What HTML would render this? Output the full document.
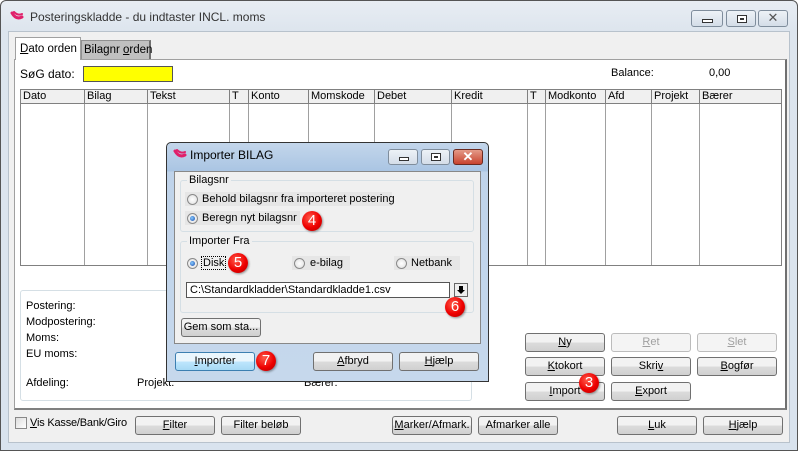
<!DOCTYPE html>
<html><head><meta charset="utf-8"><style>
*{box-sizing:border-box;margin:0;padding:0}
body{width:798px;height:451px;position:relative;overflow:hidden;font-family:"Liberation Sans",sans-serif;font-size:11px;color:#000;background:#fff;white-space:nowrap}
.a{position:absolute}
.win{left:0;top:0;width:798px;height:451px;border:1px solid #555;border-radius:6px 6px 0 0;background:linear-gradient(#e8edf3,#dde5ee 30px,#d9e3ee)}
.client{left:8px;top:31px;width:782px;height:412px;background:#f0f0f0;border:1px solid #b8c2cc}
.btn{position:absolute;height:19px;border:1px solid #707070;border-radius:3px;background:linear-gradient(#f2f2f2 50%,#dcdcdc 50%,#d0d0d0);text-align:center;line-height:17px;font-size:11px}
.dis{color:#a0a0a0;border-color:#bcbcbc;background:#f4f4f4}
.th{position:absolute;top:0;height:14px;border-right:1px solid #808080;padding-left:2px;line-height:13px}
.vl{position:absolute;top:14px;bottom:0;border-right:1px solid #a0a0a0}
.badge{position:absolute;width:20px;height:20px;border-radius:50%;background:radial-gradient(circle at 40% 35%,#ff5a4a,#e00 55%,#a00);color:#fff;font-size:15px;text-align:center;line-height:20px;box-shadow:1px 1px 2px rgba(0,0,0,.4)}
.radio{position:absolute;width:11px;height:11px;border-radius:50%;border:1px solid #8a8a8a;background:radial-gradient(#fff,#ddd)}
.radio.on::after{content:"";position:absolute;left:2px;top:2px;width:5px;height:5px;border-radius:50%;background:radial-gradient(circle at 40% 40%,#8cf,#14a)}
.wb{position:absolute;top:10px;height:17px;border:1px solid #7f8d9c;border-radius:3px;background:linear-gradient(#edf2f7,#d4dde8)}
u{text-decoration:underline}
</style></head><body>
<div class="a win"></div>
<svg class="a" style="left:10px;top:11px" width="14" height="10"><path d="M2 2 Q6 9 12 6" stroke="#e0206a" stroke-width="3" fill="none" stroke-linecap="round"/><path d="M4 1 Q8 5 12 3" stroke="#e0206a" stroke-width="2" fill="none" stroke-linecap="round"/></svg>
<div class="a" style="left:30px;top:10px;font-size:12px;color:#333">Posteringskladde - du indtaster INCL. moms</div>
<div class="wb" style="left:691px;width:32px"><div class="a" style="left:10px;top:8px;width:11px;height:4px;border:1px solid #333;background:#fff"></div></div>
<div class="wb" style="left:726px;width:30px"><div class="a" style="left:10px;top:4px;width:10px;height:8px;border:1px solid #333;background:#fff"><div style="margin:2px;height:2px;border:1px solid #333"></div></div></div>
<div class="wb" style="left:758px;width:30px;text-align:center;line-height:14px;color:#555;font-size:13px">✕</div>
<div class="a client"></div>
<div class="a" style="left:14px;top:59px;width:773px;height:351px;background:#fff;border:1px solid #a0a0a0;border-right:2px solid #707070;border-bottom:2px solid #808080"></div>
<div class="a" style="left:15px;top:37px;width:66px;height:23px;background:#fff;border:1px solid #a0a0a0;border-bottom:none;padding:5px 0 0 4px;font-size:11.5px"><u>D</u>ato orden</div>
<div class="a" style="left:81px;top:40px;width:70px;height:19px;background:#c0c0c0;border:1px solid #909090;border-bottom:none;border-right:2px solid #707070;padding:3px 0 0 2px;font-size:11.5px">Bilagnr <u>o</u>rden</div>
<div class="a" style="left:20px;top:67px;font-size:12px">SøG dato:</div>
<div class="a" style="left:83px;top:66px;width:90px;height:16px;background:#ff0;border:1px solid #555"></div>
<div class="a" style="left:611px;top:67px">Balance:</div>
<div class="a" style="left:709px;top:67px">0,00</div>
<div class="a" style="left:20px;top:89px;width:762px;height:177px;border:1px solid #808080;background:#fff">
<div class="a" style="left:0;top:0;width:760px;height:14px;background:#f0f0f0;border-bottom:1px solid #808080"></div>
<div class="th" style="left:0;width:64px">Dato</div><div class="th" style="left:64px;width:63px">Bilag</div><div class="th" style="left:127px;width:82px">Tekst</div><div class="th" style="left:209px;width:19px">T</div><div class="th" style="left:228px;width:60px">Konto</div><div class="th" style="left:288px;width:66px">Momskode</div><div class="th" style="left:354px;width:77px">Debet</div><div class="th" style="left:431px;width:76px">Kredit</div><div class="th" style="left:507px;width:18px">T</div><div class="th" style="left:525px;width:60px">Modkonto</div><div class="th" style="left:585px;width:46px">Afd</div><div class="th" style="left:631px;width:48px">Projekt</div><div class="th" style="left:679px;width:81px;border:none">Bærer</div>
<div class="vl" style="left:63px"></div><div class="vl" style="left:126px"></div><div class="vl" style="left:208px"></div><div class="vl" style="left:227px"></div><div class="vl" style="left:287px"></div><div class="vl" style="left:353px"></div><div class="vl" style="left:430px"></div><div class="vl" style="left:506px"></div><div class="vl" style="left:524px"></div><div class="vl" style="left:584px"></div><div class="vl" style="left:630px"></div><div class="vl" style="left:678px"></div>
</div>
<div class="a" style="left:20px;top:290px;width:452px;height:111px;border:1px solid #d5dfe5;border-radius:3px"></div>
<div class="a" style="left:26px;top:298px;line-height:16px">Postering:<br>Modpostering:<br>Moms:<br>EU moms:</div>
<div class="a" style="left:26px;top:377px">Afdeling:</div>
<div class="a" style="left:137px;top:377px">Projekt:</div>
<div class="a" style="left:304px;top:377px">Bærer:</div>
<div class="btn" style="left:525px;top:333px;width:80px"><u>N</u>y</div>
<div class="btn dis" style="left:611px;top:333px;width:80px"><u>R</u>et</div>
<div class="btn dis" style="left:697px;top:333px;width:80px"><u>S</u>let</div>
<div class="btn" style="left:525px;top:357px;width:80px"><u>K</u>tokort</div>
<div class="btn" style="left:611px;top:357px;width:80px">Skri<u>v</u></div>
<div class="btn" style="left:697px;top:357px;width:80px"><u>B</u>ogfør</div>
<div class="btn" style="left:525px;top:382px;width:80px"><u>I</u>mport</div>
<div class="btn" style="left:611px;top:382px;width:80px"><u>E</u>xport</div>
<div class="badge" style="left:579px;top:373px">3</div>
<div class="a" style="left:15px;top:417px;width:12px;height:12px;border:1px solid #888;background:linear-gradient(135deg,#ddd,#fff)"></div>
<div class="a" style="left:30px;top:417px;font-size:11px;letter-spacing:-0.2px"><u>V</u>is Kasse/Bank/Giro</div>
<div class="btn" style="left:135px;top:416px;width:80px"><u>F</u>ilter</div>
<div class="btn" style="left:221px;top:416px;width:80px">Filter beløb</div>
<div class="btn" style="left:392px;top:416px;width:80px"><u>M</u>arker/Afmark.</div>
<div class="btn" style="left:478px;top:416px;width:80px">Afmarker alle</div>
<div class="btn" style="left:617px;top:416px;width:80px"><u>L</u>uk</div>
<div class="btn" style="left:703px;top:416px;width:80px"><u>H</u>jælp</div>
<!-- dialog -->
<div class="a" style="left:166px;top:142px;width:323px;height:240px;border:1px solid #333;border-radius:5px 5px 0 0;background:linear-gradient(#c3d6eb,#aac5e3 28px,#bfd3ea 29px,#c6d8ec)"></div>
<svg class="a" style="left:173px;top:149px" width="14" height="10"><path d="M2 2 Q6 9 12 6" stroke="#e0206a" stroke-width="3" fill="none" stroke-linecap="round"/><path d="M4 1 Q8 5 12 3" stroke="#e0206a" stroke-width="2" fill="none" stroke-linecap="round"/></svg>
<div class="a" style="left:190px;top:148px;font-size:12px">Importer BILAG</div>
<div class="wb" style="left:388px;top:149px;width:30px;height:16px"><div class="a" style="left:10px;top:7px;width:10px;height:4px;border:1px solid #333;background:#fff"></div></div>
<div class="wb" style="left:421px;top:149px;width:29px;height:16px"><div class="a" style="left:9px;top:3px;width:10px;height:8px;border:1px solid #333;background:#fff"><div style="margin:2px;height:2px;border:1px solid #333"></div></div></div>
<div class="a" style="left:453px;top:149px;width:30px;height:16px;border:1px solid #6b2a20;border-radius:3px;background:linear-gradient(#e49a88,#c8432e);color:#fff;text-align:center;line-height:14px;font-size:13px;font-weight:bold">✕</div>
<div class="a" style="left:174px;top:171px;width:307px;height:173px;background:#f0f0f0;border:1px solid #888"></div>
<div class="a" style="left:180px;top:180px;width:294px;height:52px;border:1px solid #d5dfe5;border-radius:3px"></div>
<div class="a" style="left:187px;top:174px;background:#f0f0f0;padding:0 2px">Bilagsnr</div>
<div class="a" style="left:185px;top:192px;width:207px;height:14px;background:#e6e6e6"></div>
<div class="radio" style="left:187px;top:194px"></div><div class="a" style="left:202px;top:193px">Behold bilagsnr fra importeret postering</div>
<div class="a" style="left:185px;top:211px;width:115px;height:14px;background:#e6e6e6"></div>
<div class="radio on" style="left:187px;top:213px"></div><div class="a" style="left:202px;top:212px">Beregn nyt bilagsnr</div>
<div class="badge" style="left:302px;top:211px">4</div>
<div class="a" style="left:180px;top:241px;width:294px;height:72px;border:1px solid #d5dfe5;border-radius:3px"></div>
<div class="a" style="left:187px;top:235px;background:#f0f0f0;padding:0 2px">Importer Fra</div>
<div class="radio on" style="left:187px;top:258px"></div><div class="a" style="left:201px;top:256px;border:1px dotted #000;padding:0 1px">Disk</div>
<div class="badge" style="left:228px;top:253px">5</div>
<div class="a" style="left:292px;top:256px;width:58px;height:14px;background:#e6e6e6"></div>
<div class="radio" style="left:294px;top:258px"></div><div class="a" style="left:310px;top:257px">e-bilag</div>
<div class="a" style="left:394px;top:256px;width:66px;height:14px;background:#e6e6e6"></div>
<div class="radio" style="left:396px;top:258px"></div><div class="a" style="left:411px;top:257px">Netbank</div>
<div class="a" style="left:186px;top:282px;width:264px;height:16px;background:#fff;border:1px solid #555;padding:1px 0 0 3px">C:\Standardkladder\Standardkladde1.csv</div>
<div class="a" style="left:454px;top:283px;width:14px;height:14px;border:1px solid #666;background:#eee"></div>
<svg class="a" style="left:456px;top:285px" width="10" height="10"><path d="M3 1h4v4h2L5 9 1 5h2z" fill="#000"/></svg>
<div class="badge" style="left:445px;top:297px">6</div>
<div class="btn" style="left:181px;top:318px;width:80px">Gem som sta...</div>
<div class="btn" style="left:175px;top:352px;width:80px;border-color:#3c7fb1;background:linear-gradient(#eaf6fd 50%,#bee6fd 50%,#a7d9f5)"><u>I</u>mporter</div>
<div class="badge" style="left:256px;top:351px">7</div>
<div class="btn" style="left:313px;top:352px;width:80px"><u>A</u>fbryd</div>
<div class="btn" style="left:399px;top:352px;width:80px"><u>H</u>jælp</div>
</body></html>
